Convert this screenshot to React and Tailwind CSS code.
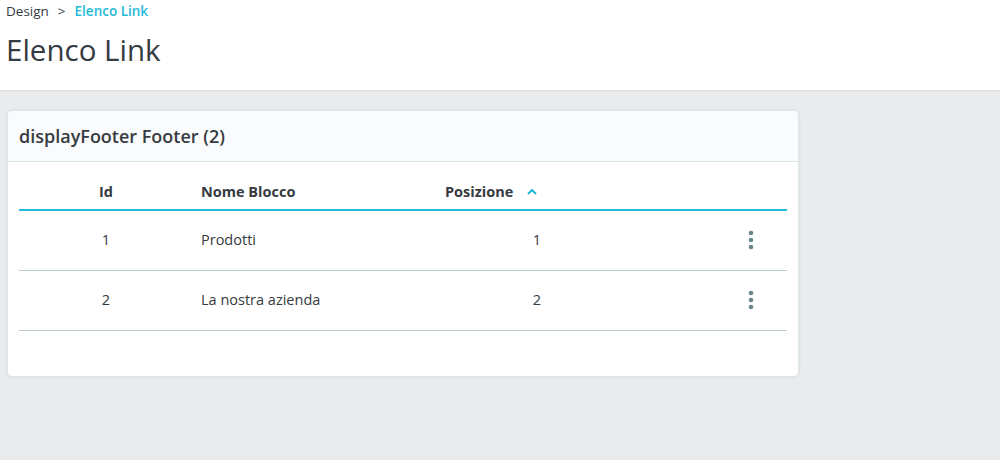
export default function App() {
  const rows = [
    { id: 1, name: "Prodotti", pos: 1 },
    { id: 2, name: "La nostra azienda", pos: 2 },
  ];

  return (
    <div
      className="w-[1000px] h-[460px] bg-[#eaebec] text-[#363a41] overflow-hidden"
      style={{ fontFamily: '"Open Sans", "Liberation Sans", sans-serif' }}
    >
      {/* page header */}
      <div className="bg-white h-[90px] px-[6px] pt-[2px] shadow-[0_1px_2px_rgba(0,0,0,0.06)]">
        <div className="flex items-center gap-[9px] text-[13.5px] leading-[18px]">
          <span>Design</span>
          <span>&gt;</span>
          <span className="text-[#25b9d7] font-semibold">Elenco Link</span>
        </div>
        <h1 className="text-[29.5px] leading-[38px] mt-[11px] font-normal">Elenco Link</h1>
      </div>

      <div className="px-[7px] pt-[20px]">
        <div className="w-[792px] bg-white rounded-[5px] border border-[#dbe6e9] shadow-[0_0_4px_rgba(0,0,0,0.06)] overflow-hidden">
          <div className="h-[51px] bg-[#fafbfc] border-b border-[#dbe6e9] flex items-center px-[11px]">
            <h3 className="text-[18px] font-semibold leading-none">displayFooter Footer (2)</h3>
          </div>

          <div className="px-[11px] pb-[45px]">
            <div className="flex items-center h-[49px] border-b-2 border-[#25b9d7] text-[14.5px] font-bold pt-[13px]">
              <div className="w-[174px] text-center">Id</div>
              <div className="w-[240px] pl-[8px]">Nome Blocco</div>
              <div className="w-[116px] pl-[12px] flex items-center gap-[14px]">
                <span>Posizione</span>
                <svg width="10" height="7" viewBox="0 0 10 7" className="mt-[-2px]">
                  <path d="M1 6 L5 2 L9 6" fill="none" stroke="#25b9d7" strokeWidth="2" />
                </svg>
              </div>
              <div className="flex-1" />
            </div>

            {rows.map((r) => (
              <div
                key={r.id}
                className="flex items-center h-[60px] pb-[2px] border-b border-[#bbcdd2] text-[14.5px]"
              >
                <div className="w-[174px] text-center">{r.id}</div>
                <div className="w-[240px] pl-[8px]">{r.name}</div>
                <div className="w-[116px] text-right pr-[8px]">{r.pos}</div>
                <div className="flex-1 flex justify-end pr-[33px]">
                  <svg width="6" height="20" viewBox="0 0 6 20">
                    <circle cx="3" cy="3" r="2.3" fill="#6c868e" />
                    <circle cx="3" cy="10" r="2.3" fill="#6c868e" />
                    <circle cx="3" cy="17" r="2.3" fill="#6c868e" />
                  </svg>
                </div>
              </div>
            ))}
          </div>
        </div>
      </div>
    </div>
  );
}
